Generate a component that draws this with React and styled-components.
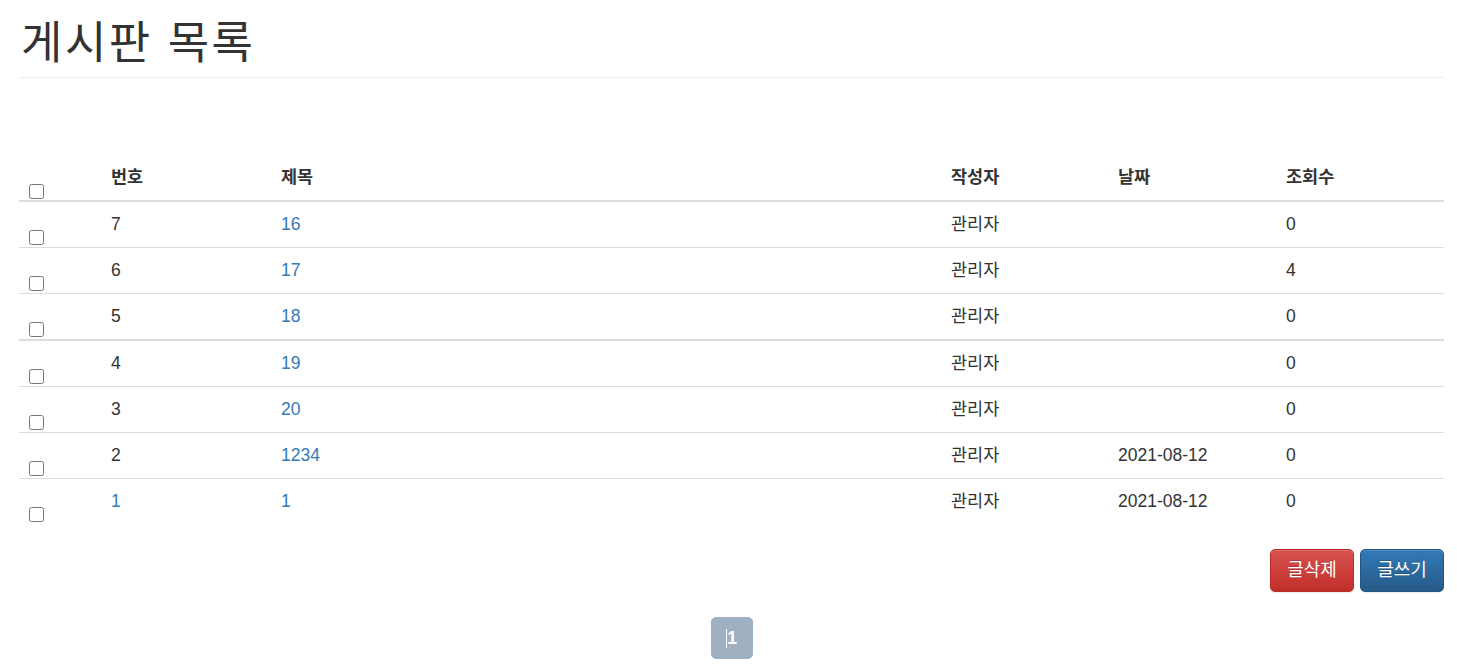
import React from "react";
import styled, { createGlobalStyle } from "styled-components";

const Global = createGlobalStyle`
  html, body { margin: 0; padding: 0; background: #fff; }
  body {
    font-family: "Liberation Sans", "Noto Sans CJK KR", Arial, sans-serif;
    font-size: 17.5px;
    line-height: 25px;
    color: #333;
  }
  * { box-sizing: border-box; }
`;

const Container = styled.div`
  padding: 0 13px 0 19px;
`;

const PageHeader = styled.div`
  margin: 21px 0 0;
  padding-bottom: 11px;
  border-bottom: 1px solid #eee;
`;

const Title = styled.h1`
  margin: 0;
  font-size: 45px;
  line-height: 45px;
  font-weight: 400;
  letter-spacing: 2.5px;
  color: #333;
  font-family: "Liberation Sans", "Noto Sans CJK KR", sans-serif;
  padding-left: 2px;
`;

const Table = styled.table`
  width: 100%;
  margin-top: 77px;
  border-collapse: collapse;
  border-spacing: 0;
  table-layout: fixed;
`;

const Th = styled.th`
  text-align: left;
  font-weight: bold;
  vertical-align: bottom;
  padding: 10px;
  line-height: 25px;
  border-bottom: 2.5px solid #ddd;
  width: ${(p) => p.$w}px;
`;

const CheckTh = styled(Th)`
  padding: 0 10px 1px;
`;

const Body = styled.tbody`
  & + & { border-top: 2.5px solid #ddd; }
`;

const Row = styled.tr`
  border-top: 1px solid #ddd;
  ${Body}:first-of-type &:first-child { border-top: none; }
`;

const Td = styled.td`
  padding: 10px;
  vertical-align: top;
  line-height: 25px;
  white-space: nowrap;
`;

const CheckTd = styled(Td)`
  vertical-align: bottom;
  padding: 0 10px 2px;
`;

const Check = styled.input.attrs({ type: "checkbox" })`
  display: block;
  width: 15px;
  height: 15px;
  margin: 0;
`;

const Link = styled.a`
  color: #337ab7;
  text-decoration: none;
`;

const Actions = styled.div`
  display: flex;
  justify-content: flex-end;
  gap: 6px;
  margin-top: 25px;
`;

const Button = styled.button`
  font-family: "Liberation Sans", "Noto Sans CJK KR", sans-serif;
  font-size: 18px;
  line-height: 25px;
  height: 43px;
  width: 84px;
  padding: 0;
  color: #fff;
  border-radius: 5px;
  border: 1px solid ${(p) => (p.$danger ? "#b92c28" : "#245580")};
  background-image: ${(p) =>
    p.$danger
      ? "linear-gradient(to bottom, #d9534f 0, #c12e2a 100%)"
      : "linear-gradient(to bottom, #337ab7 0, #265a88 100%)"};
  box-shadow: inset 0 1px 0 rgba(255,255,255,.15), 0 1px 1px rgba(0,0,0,.075);
  text-shadow: 0 -1px 0 rgba(0,0,0,.2);
`;

const Pagination = styled.div`
  display: flex;
  justify-content: center;
  margin-top: 25px;
`;

const PageItem = styled.span`
  display: flex;
  align-items: center;
  justify-content: center;
  width: 42px;
  height: 42px;
  border-radius: 5px;
  background: #9fb0c3;
  border: 1px solid #9fb0c3;
  color: #fff;
  font-size: 17.5px;
  font-weight: bold;
  &::before {
    content: "";
    display: block;
    width: 1px;
    height: 19px;
    background: #fff;
    margin-right: 0;
  }
`;

const widths = [82, 170, 670, 167, 168, 168];

const rows = [
  { no: "7", title: "16", author: "관리자", date: "", views: "0" },
  { no: "6", title: "17", author: "관리자", date: "", views: "4" },
  { no: "5", title: "18", author: "관리자", date: "", views: "0" },
  { no: "4", title: "19", author: "관리자", date: "", views: "0" },
  { no: "3", title: "20", author: "관리자", date: "", views: "0" },
  { no: "2", title: "1234", author: "관리자", date: "2021-08-12", views: "0" },
  { no: "1", title: "1", author: "관리자", date: "2021-08-12", views: "0", noLink: true },
];

const renderRow = (r) => (
  <Row key={r.no}>
    <CheckTd><Check /></CheckTd>
    <Td>{r.noLink ? <Link href="#">{r.no}</Link> : r.no}</Td>
    <Td><Link href="#">{r.title}</Link></Td>
    <Td>{r.author}</Td>
    <Td>{r.date}</Td>
    <Td>{r.views}</Td>
  </Row>
);

export default function App() {
  return (
    <>
      <Global />
      <Container>
        <PageHeader>
          <Title>게시판 목록</Title>
        </PageHeader>
        <Table>
          <thead>
            <tr>
              <CheckTh $w={widths[0]}><Check /></CheckTh>
              <Th $w={widths[1]}>번호</Th>
              <Th $w={widths[2]}>제목</Th>
              <Th $w={widths[3]}>작성자</Th>
              <Th $w={widths[4]}>날짜</Th>
              <Th $w={widths[5]}>조회수</Th>
            </tr>
          </thead>
          <Body>{rows.slice(0, 3).map(renderRow)}</Body>
          <Body>{rows.slice(3).map(renderRow)}</Body>
        </Table>
        <Actions>
          <Button $danger>글삭제</Button>
          <Button>글쓰기</Button>
        </Actions>
        <Pagination>
          <PageItem>1</PageItem>
        </Pagination>
      </Container>
    </>
  );
}
